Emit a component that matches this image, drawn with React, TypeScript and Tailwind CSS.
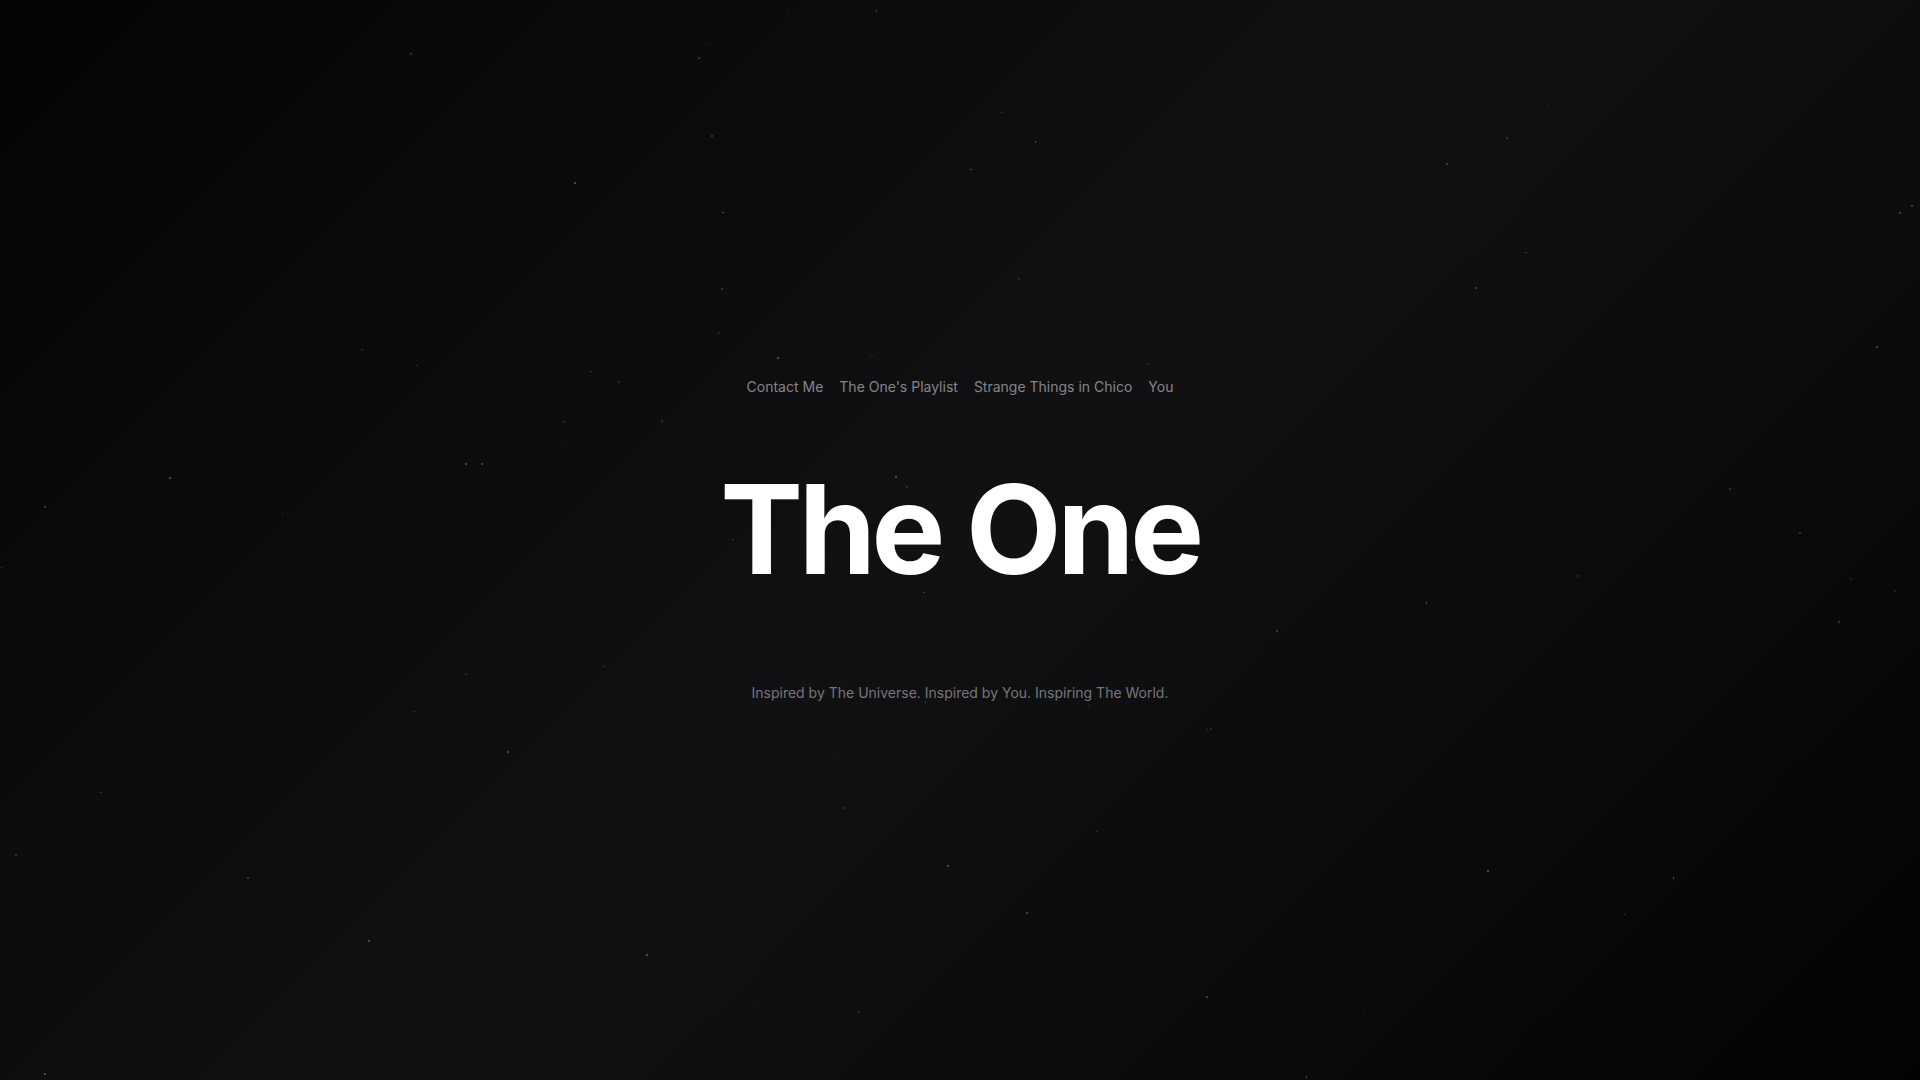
import { useMemo } from "react";

const NAV_ITEMS = ["Contact Me", "The One's Playlist", "Strange Things in Chico", "You"];

// small seeded rng so the star field is the same on every render
const makeRng = (seed: number) => () => {
  seed = (seed * 16807) % 2147483647;
  return (seed - 1) / 2147483646;
};

export default function App() {
  const stars = useMemo(() => {
    const rand = makeRng(42);
    return Array.from({ length: 80 }, () => ({
      left: rand() * 100,
      top: rand() * 100,
      opacity: 0.2 + rand() * 0.4,
      size: rand() > 0.7 ? 2 : 1.5,
    }));
  }, []);

  return (
    <div
      className="relative flex h-screen w-full flex-col items-center justify-center overflow-hidden bg-[linear-gradient(135deg,#040404_0%,#0b0b0c_25%,#111113_50%,#0b0b0c_75%,#030303_100%)]"
      style={{ fontFamily: "Inter, 'Noto Sans', sans-serif" }}
    >
      <div className="pointer-events-none absolute inset-0">
        {stars.map((s, i) => (
          <span
            key={i}
            className="absolute rounded-full bg-[#9a9aa0]"
            style={{
              left: `${s.left}%`,
              top: `${s.top}%`,
              width: s.size,
              height: s.size,
              opacity: s.opacity,
            }}
          />
        ))}
      </div>

      <nav className="relative flex items-center gap-4 text-[14px] leading-5 text-[#85858b]">
        {NAV_ITEMS.map((item) => (
          <a key={item} href="#" className="hover:text-white">
            {item}
          </a>
        ))}
      </nav>

      <h1 className="relative mt-[70px] text-[124px] font-bold leading-none tracking-[-0.035em] text-white">
        The One
      </h1>

      <p className="relative mt-[92px] text-[14px] leading-5 text-[#76767c]">
        Inspired by The Universe. Inspired by You. Inspiring The World.
      </p>
    </div>
  );
}
